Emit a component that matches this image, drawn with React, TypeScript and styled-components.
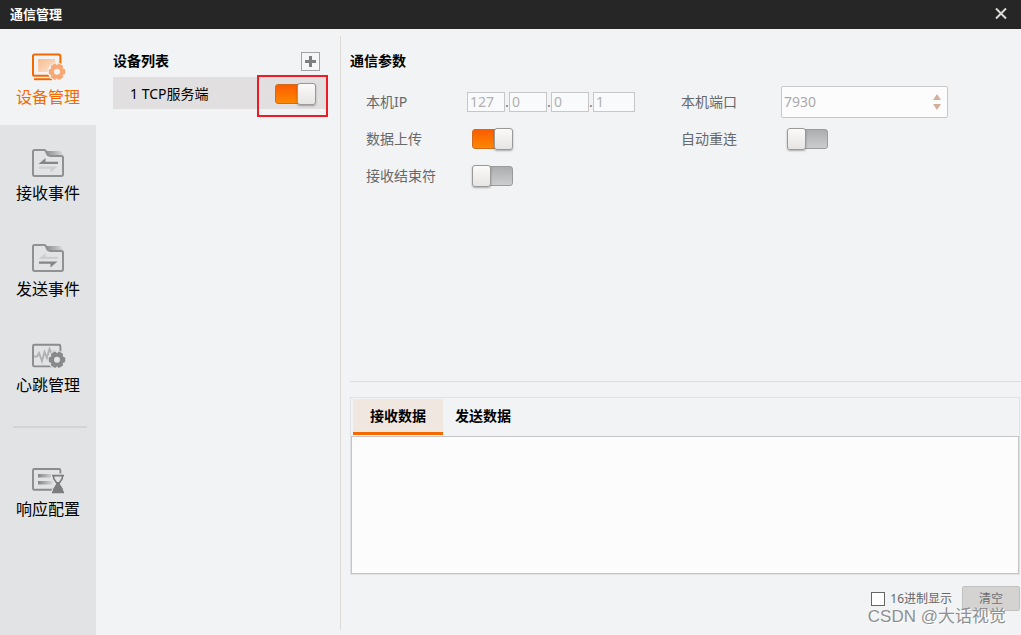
import React, { useState } from "react";
import styled, { createGlobalStyle } from "styled-components";

const GlobalStyle = createGlobalStyle`
  *, *::before, *::after { box-sizing: border-box; }
  body {
    margin: 0;
    background: #f1f3f5;
    color: #000;
    font-family: "Noto Sans", "Noto Sans CJK SC", sans-serif;
    font-size: 14px;
    line-height: 20px;
  }
  button, input, textarea { font: inherit; margin: 0; }
`;

const Window = styled.div`
  display: flex;
  flex-direction: column;
  min-height: 100vh;
`;

const TitleBar = styled.header`
  display: flex;
  align-items: center;
  justify-content: space-between;
  height: 29px;
  padding: 0 13px 2px 10px;
  background: #262626;
  color: #fff;
`;

const WindowTitle = styled.h1`
  margin: 0;
  font-size: 13px;
  line-height: 20px;
  font-weight: 700;
`;

const CloseButton = styled.button`
  display: flex;
  padding: 0;
  border: 0;
  background: none;
  color: #dcdcd8;
`;

const Body = styled.div`
  display: flex;
  flex: 1;
`;

const Sidebar = styled.nav`
  flex: 0 0 96px;
  background: #e2e3e5;
`;

const NavItem = styled.button<{ $active?: boolean }>`
  display: flex;
  flex-direction: column;
  align-items: center;
  gap: 2px;
  width: 100%;
  height: 96px;
  padding: 22px 0 0;
  border: 0;
  background: ${(p) => (p.$active ? "#f1f3f5" : "transparent")};
  color: ${(p) => (p.$active ? "#f56a00" : "#000")};
  font-size: 16px;
  line-height: 24px;
`;

const NavDivider = styled.hr`
  height: 2px;
  margin: 13px 9px 13px 13px;
  border: 0;
  background: #d3d4d6;
`;

const DevicePanel = styled.section`
  flex: 0 0 245px;
  margin: 7px 0 5px;
  padding: 15px 12px 0 17px;
  border-right: 1px solid #dfdbd8;
`;

const PanelHeader = styled.div`
  display: flex;
  align-items: center;
  justify-content: space-between;
  height: 20px;
  padding-right: 8px;
`;

const SectionTitle = styled.h2`
  margin: 0;
  font-size: 14px;
  line-height: 20px;
  font-weight: 700;
`;

const AddButton = styled.button`
  display: flex;
  align-items: center;
  justify-content: center;
  width: 19px;
  height: 19px;
  padding: 0;
  border: 1px solid #a2a3a5;
  background: #f5f6f7;
`;

const DeviceRow = styled.div`
  position: relative;
  display: flex;
  align-items: center;
  justify-content: space-between;
  height: 32px;
  margin-top: 6px;
  padding: 2px 12px 0 17px;
  background: #e1dfe0;
`;

const Highlight = styled.span`
  position: absolute;
  top: -2px;
  right: 0;
  width: 71px;
  height: 42px;
  border: 2px solid #ed1c24;
  pointer-events: none;
`;

const Switch = styled.input`
  appearance: none;
  display: flex;
  align-items: center;
  justify-content: flex-start;
  flex: none;
  width: 41px;
  height: 20px;
  border: 1px solid #9b9b9b;
  border-radius: 3px;
  background: linear-gradient(#acadae, #cccdce);

  &::before {
    content: "";
    flex: none;
    width: 19px;
    height: 22px;
    margin: 0 -1px;
    border: 1px solid #999;
    border-radius: 3px;
    background: linear-gradient(#fbfaf9, #e6e5e3);
    box-shadow: 0 1px 2px rgba(0, 0, 0, 0.3);
  }

  &:checked {
    justify-content: flex-end;
    border-color: #d06a20;
    background: linear-gradient(#fa5c00, #ff8800);
  }
`;

const Main = styled.main`
  display: flex;
  flex: 1;
  flex-direction: column;
  min-width: 0;
  padding-left: 9px;
`;

const Params = styled.section`
  flex: 1;
  padding: 22px 0 20px;
  border-bottom: 1px solid #dcdddf;
`;

const ParamGrid = styled.div`
  display: grid;
  grid-template-columns: 315px minmax(0, 1fr);
  grid-auto-rows: 36px;
  gap: 1px 0;
  padding: 13px 0 0 16px;
`;

const Field = styled.div<{ $column?: number }>`
  display: flex;
  align-items: center;
  grid-column: ${(p) => p.$column ?? 1};
`;

const FieldLabel = styled.label`
  width: 100px;
  color: #66686a;
`;

const SwitchSlot = styled.div`
  padding-left: 6px;
`;

const IpGroup = styled.div`
  display: flex;
  padding-left: 1px;
  color: #777;
`;

const IpInput = styled.input<{ $wide?: boolean }>`
  width: ${(p) => (p.$wide ? 42 : 38)}px;
  height: 20px;
  padding: 0 2px;
  border: 1px solid #c6c7c9;
  background: #f9fafc;
  color: #b0b1b2;
`;

const Dot = styled.span`
  width: 4px;
`;

const PortBox = styled.div`
  display: flex;
  align-items: center;
  width: 167px;
  height: 32px;
  padding: 0 5px 0 2px;
  border: 1px solid #c8c8c8;
  border-radius: 2px;
  background: #fcfcfc;
`;

const PortInput = styled.input`
  flex: 1;
  min-width: 0;
  padding: 0;
  border: 0;
  background: none;
  color: #aaa;
`;

const Stepper = styled.div`
  display: flex;
  flex-direction: column;
  gap: 4px;
`;

const StepButton = styled.button`
  display: flex;
  padding: 0;
  border: 0;
  background: none;
`;

const DataPanel = styled.section`
  margin: 15px 1px 0 0;
  border: 1px solid #e0e1e3;
`;

const TabList = styled.div`
  display: flex;
  height: 38px;
  padding: 1px 0 1px 2px;
`;

const Tab = styled.button<{ $active?: boolean }>`
  width: ${(p) => (p.$active ? 90 : 80)}px;
  padding: 0;
  border: 0;
  border-bottom: 3px solid ${(p) => (p.$active ? "#f56a00" : "transparent")};
  background: ${(p) => (p.$active ? "#f1e7e1" : "transparent")};
  color: #000;
  font-weight: 700;
`;

const DataView = styled.textarea`
  display: block;
  width: 100%;
  height: 138px;
  padding: 6px;
  border: 1px solid #c5c5c5;
  background: #fcfcfc;
  resize: none;
`;

const Footer = styled.footer`
  position: relative;
  display: flex;
  justify-content: flex-end;
  align-items: center;
  gap: 10px;
  height: 60px;
  padding: 0 1px 13px 0;
`;

const HexLabel = styled.label`
  display: flex;
  align-items: center;
  gap: 5px;
  color: #66686a;
  font-size: 12px;
`;

const HexCheckbox = styled.input`
  appearance: none;
  width: 14px;
  height: 14px;
  border: 1px solid #666;
  background: #fff;
`;

const ClearButton = styled.button`
  width: 58px;
  height: 25px;
  padding: 0;
  border: 1px solid #c2c1c0;
  border-radius: 2px;
  background: #d5d3d2;
  color: #707070;
  font-size: 12px;
`;

const Watermark = styled.span`
  position: absolute;
  right: 15px;
  bottom: 6px;
  color: #8e9092;
  font-family: "Liberation Sans", "Noto Sans CJK SC", sans-serif;
  font-size: 17px;
  line-height: 24px;
  text-shadow: 1px 1px 0 #fff;
  white-space: nowrap;
  pointer-events: none;
`;

const Icon = ({ children }: { children: React.ReactNode }) => (
  <svg width="36" height="32" viewBox="0 0 36 32" fill="none" aria-hidden="true">
    {children}
  </svg>
);

const Gear = ({ color, halo }: { color: string; halo: string }) => {
  const teeth = [0, 60, 120];
  return (
    <g transform="translate(27 20.7)">
      <circle r="9.3" fill={halo} />
      <circle r="6.7" fill={color} />
      {teeth.map((angle) => (
        <rect key={angle} x="-8.2" y="-3" width="16.4" height="6" rx="1.6" fill={color} transform={`rotate(${angle})`} />
      ))}
      <circle r="3" fill={halo} />
    </g>
  );
};

const DeviceIcon = () => (
  <Icon>
    <defs>
      <linearGradient id="screen" x1="0" y1="0" x2="1" y2="1">
        <stop offset="0" stopColor="#f8bd90" />
        <stop offset="1" stopColor="#fbe3d0" />
      </linearGradient>
    </defs>
    <rect x="3" y="3.6" width="27.4" height="21.2" rx="1.6" stroke="#f56a00" strokeWidth="2" />
    <rect x="8" y="8" width="17" height="13" fill="url(#screen)" />
    <path d="M4 28.2H22" stroke="#f56a00" strokeWidth="2" />
    <Gear color="#f7a874" halo="#f1f3f5" />
  </Icon>
);

const FolderIcon = ({ id, send }: { id: string; send?: boolean }) => (
  <Icon>
    <defs>
      <linearGradient id={id} x1="0" y1="0" x2="1" y2="0">
        <stop offset="0" stopColor="#888" />
        <stop offset="1" stopColor="#d6d7d8" />
      </linearGradient>
    </defs>
    <g transform={send ? "translate(0 -1)" : undefined}>
      <path d="M15 4H28Q32.5 4 33 9H21Q17 9 15 4Z" fill={`url(#${id})`} />
      <path d="M4.6 3H14.3Q15.4 3 16 4.2L17 6.8Q17.8 8.9 20 8.9H31.4Q33 8.9 33 10.6V27.2Q33 28.9 31.4 28.9H4.6Q3 28.9 3 27.2V4.6Q3 3 4.6 3Z" stroke="#909192" strokeWidth="2" />
      <path d="M8.5 17L15.5 11V14.8H28V17Z" fill={send ? "#cdcecf" : "#858687"} />
      <path d="M9 19.5H27.5L20.5 25.5V21.8H9Z" fill={send ? "#858687" : "#cdcecf"} />
    </g>
  </Icon>
);

const HeartbeatIcon = () => (
  <Icon>
    <rect x="3" y="5.8" width="27.4" height="21.6" rx="1.4" stroke="#8b8c8d" strokeWidth="1.9" />
    <path d="M4 17.5H7L9 14L12 22L14.5 13L17 19L19.5 10L22 15.5L24 12.5L26 15H29" stroke="#b2b3b4" strokeWidth="2" />
    <Gear color="#88898a" halo="#e2e3e5" />
  </Icon>
);

const ResponseIcon = () => (
  <Icon>
    <defs>
      <linearGradient id="lines" x1="8" y1="0" x2="22" y2="0" gradientUnits="userSpaceOnUse">
        <stop offset="0" stopColor="#858687" />
        <stop offset="1" stopColor="#d2d3d4" />
      </linearGradient>
    </defs>
    <rect x="3" y="6" width="27.4" height="20.8" rx="1.4" stroke="#8b8c8d" strokeWidth="1.9" />
    <path d="M20.5 10.5H35V32H19.5L24.5 21Z" fill="#e2e3e5" />
    <rect x="8" y="11" width="13" height="3.5" fill="url(#lines)" />
    <rect x="8" y="18" width="14.5" height="3.5" fill="url(#lines)" />
    <path d="M22 12.6H34M22 29.2H34" stroke="#7c7d7e" strokeWidth="1.9" />
    <path d="M23.7 13V15.5L27.2 20.8L23.7 26.5V29H32.3V26.5L28.8 20.8L32.3 15.5V13" stroke="#7c7d7e" strokeWidth="1.6" />
    <path d="M26.2 19H29.8L28.8 20.8L32.3 26.5V29H23.7V26.5L27.2 20.8Z" fill="#7c7d7e" />
  </Icon>
);

const NAV = [
  { label: "设备管理", icon: <DeviceIcon /> },
  { label: "接收事件", icon: <FolderIcon id="receive-tab" /> },
  { label: "发送事件", icon: <FolderIcon id="send-tab" send /> },
  { label: "心跳管理", icon: <HeartbeatIcon /> },
];

export default function App() {
  const [deviceOn, setDeviceOn] = useState(true);
  const [upload, setUpload] = useState(true);
  const [terminator, setTerminator] = useState(false);
  const [reconnect, setReconnect] = useState(false);
  const octets = ["127", "0", "0", "1"];

  return (
    <>
      <GlobalStyle />
      <Window>
        <TitleBar>
          <WindowTitle>通信管理</WindowTitle>
          <CloseButton aria-label="关闭">
            <svg width="14" height="14" viewBox="0 0 14 14" stroke="currentColor" strokeWidth="2" aria-hidden="true">
              <path d="M2 1.5L12 11.5M12 1.5L2 11.5" />
            </svg>
          </CloseButton>
        </TitleBar>
        <Body>
          <Sidebar>
            {NAV.map((item, index) => (
              <NavItem key={item.label} $active={index === 0}>
                {item.icon}
                {item.label}
              </NavItem>
            ))}
            <NavDivider />
            <NavItem>
              <ResponseIcon />
              响应配置
            </NavItem>
          </Sidebar>
          <DevicePanel>
            <PanelHeader>
              <SectionTitle>设备列表</SectionTitle>
              <AddButton aria-label="添加设备">
                <svg width="11" height="11" viewBox="0 0 11 11" stroke="#7d7e80" strokeWidth="3" aria-hidden="true">
                  <path d="M5.5 0V11M0 5.5H11" />
                </svg>
              </AddButton>
            </PanelHeader>
            <DeviceRow>
              <label htmlFor="device-1">1 TCP服务端</label>
              <Switch id="device-1" type="checkbox" checked={deviceOn} onChange={(e) => setDeviceOn(e.target.checked)} />
              <Highlight />
            </DeviceRow>
          </DevicePanel>
          <Main>
            <Params>
              <SectionTitle>通信参数</SectionTitle>
              <ParamGrid>
                <Field>
                  <FieldLabel htmlFor="ip-0">本机IP</FieldLabel>
                  <IpGroup>
                    {octets.map((value, index) => (
                      <React.Fragment key={index}>
                        {index > 0 && <Dot>.</Dot>}
                        <IpInput id={`ip-${index}`} aria-label={`本机IP ${index + 1}`} $wide={index === 3} defaultValue={value} disabled />
                      </React.Fragment>
                    ))}
                  </IpGroup>
                </Field>
                <Field $column={2}>
                  <FieldLabel htmlFor="port">本机端口</FieldLabel>
                  <PortBox>
                    <PortInput id="port" defaultValue="7930" disabled />
                    <Stepper>
                      <StepButton aria-label="增加" disabled>
                        <svg width="10" height="6" viewBox="0 0 10 6" aria-hidden="true"><path d="M5 0L9 6H1Z" fill="#d2b09a" /></svg>
                      </StepButton>
                      <StepButton aria-label="减少" disabled>
                        <svg width="10" height="6" viewBox="0 0 10 6" aria-hidden="true"><path d="M5 6L9 0H1Z" fill="#d2b09a" /></svg>
                      </StepButton>
                    </Stepper>
                  </PortBox>
                </Field>
                <Field>
                  <FieldLabel htmlFor="upload">数据上传</FieldLabel>
                  <SwitchSlot>
                    <Switch id="upload" type="checkbox" checked={upload} onChange={(e) => setUpload(e.target.checked)} />
                  </SwitchSlot>
                </Field>
                <Field $column={2}>
                  <FieldLabel htmlFor="reconnect">自动重连</FieldLabel>
                  <SwitchSlot>
                    <Switch id="reconnect" type="checkbox" checked={reconnect} onChange={(e) => setReconnect(e.target.checked)} />
                  </SwitchSlot>
                </Field>
                <Field>
                  <FieldLabel htmlFor="terminator">接收结束符</FieldLabel>
                  <SwitchSlot>
                    <Switch id="terminator" type="checkbox" checked={terminator} onChange={(e) => setTerminator(e.target.checked)} />
                  </SwitchSlot>
                </Field>
              </ParamGrid>
            </Params>
            <DataPanel>
              <TabList role="tablist">
                <Tab role="tab" aria-selected="true" $active>接收数据</Tab>
                <Tab role="tab" aria-selected="false">发送数据</Tab>
              </TabList>
              <DataView aria-label="接收数据" readOnly />
            </DataPanel>
            <Footer>
              <HexLabel>
                <HexCheckbox type="checkbox" />
                16进制显示
              </HexLabel>
              <ClearButton>清空</ClearButton>
              <Watermark>CSDN @大话视觉</Watermark>
            </Footer>
          </Main>
        </Body>
      </Window>
    </>
  );
}
